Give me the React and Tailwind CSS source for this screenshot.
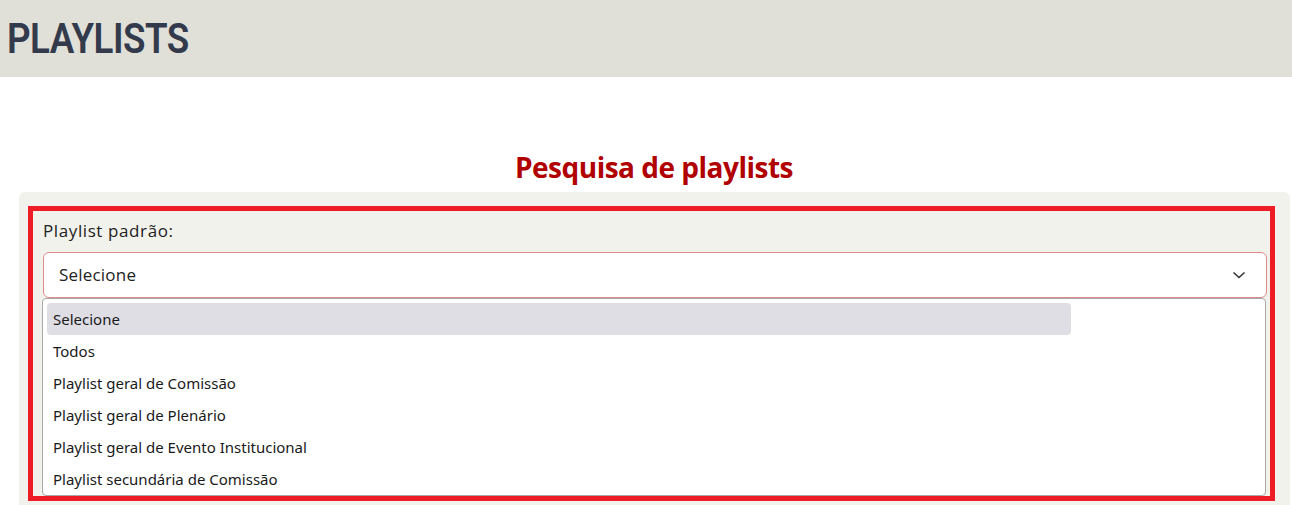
export default function App() {
  const items = [
    "Selecione",
    "Todos",
    "Playlist geral de Comissão",
    "Playlist geral de Plenário",
    "Playlist geral de Evento Institucional",
    "Playlist secundária de Comissão",
  ];
  return (
    <div className="w-[1292px] h-[505px] overflow-hidden bg-white" style={{ fontFamily: '"Open Sans", sans-serif' }}>
      <div className="h-[77px] bg-[#e0dfd8] flex items-center px-[7px]">
        <h1 className="text-[42px] font-semibold text-[#323a4b] tracking-[-0.6px] leading-none origin-left scale-x-[0.875]" style={{ fontFamily: 'Roboto, sans-serif' }}>
          PLAYLISTS
        </h1>
      </div>
      <div className="pt-[69px]">
        <h2 className="text-center pl-[16px] text-[28px] leading-[42px] font-bold text-[#b10000] tracking-[-0.5px]" style={{ fontFamily: '"Open Sans", sans-serif' }}>
          Pesquisa de playlists
        </h2>
        <div className="mt-[4px] ml-[19px] mr-[2px] rounded-md bg-[#f2f2ed] pt-[14px] pl-[9px] pr-[15px] pb-4">
          <div className="border-[5px] border-[#ee1c25] h-[295px] pl-[10px] pr-[3px] pt-[8px]">
            <div className="text-[17px] leading-[24px] tracking-[0.6px] text-[#222]">Playlist padrão:</div>
            <div className="relative mt-[9px]">
              <div className="h-[46px] rounded-md border border-[#e08a8a] bg-white flex items-center justify-between pl-[15px] pr-[20px]">
                <span className="text-[17px] tracking-[0.2px] text-[#222]">Selecione</span>
                <svg width="14" height="10" viewBox="0 0 14 10" fill="none">
                  <polyline points="1.5,2.5 7,7.5 12.5,2.5" stroke="#333" strokeWidth="1.6" fill="none" />
                </svg>
              </div>
              <div className="absolute left-[-1px] top-[46px] w-[1224px] h-[198px] bg-white border border-[#a8a8a8] rounded-[4px] pt-[4px] pl-[4px]" style={{ fontFamily: '"Noto Sans", sans-serif' }}>
                {items.map((t, i) => (
                  <div
                    key={t}
                    className={`h-[32px] flex items-center pl-[6px] text-[15px] text-[#1a1a1a] ${i === 0 ? "bg-[#dfdee5] w-[1024px] rounded-sm" : ""}`}
                  >
                    {t}
                  </div>
                ))}
              </div>
            </div>
          </div>
        </div>
      </div>
    </div>
  );
}
